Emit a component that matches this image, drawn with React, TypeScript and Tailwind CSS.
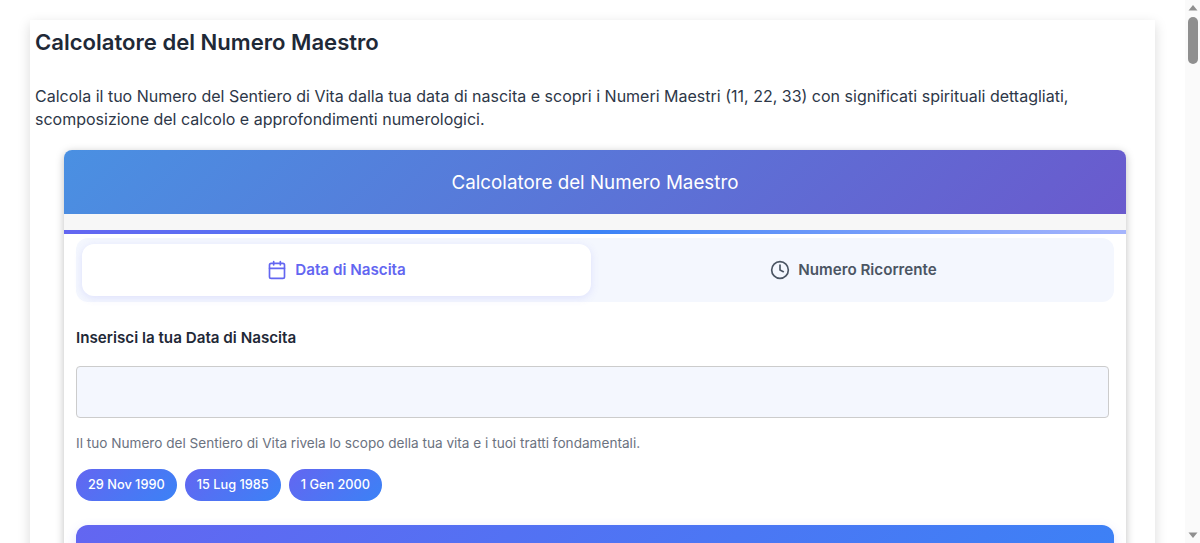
import { Calendar, Clock } from "lucide-react";

const samples = ["29 Nov 1990", "15 Lug 1985", "1 Gen 2000"];

export default function App() {
  return (
    <div className="flex h-screen overflow-hidden bg-white font-['Inter',sans-serif] text-[#1f2937]">
      <div className="flex-1 pt-5 pl-[30px] pr-[30px]">
        <main className="min-h-[700px] bg-white px-[5px] shadow-[0_4px_12px_rgba(0,0,0,0.15)]">
          <h1 className="pt-2 text-[22.08px] leading-[29px] font-semibold text-[#1f2937]">
            Calcolatore del Numero Maestro
          </h1>
          <p className="mt-[28px] text-base leading-[23px] text-[#2d3748]">
            Calcola il tuo Numero del Sentiero di Vita dalla tua data di nascita e scopri i Numeri Maestri (11, 22, 33) con significati spirituali dettagliati, scomposizione del calcolo e approfondimenti numerologici.
          </p>

          <section className="mt-[19px] ml-[29px] w-[1062px] rounded-lg bg-white shadow-[0_2px_8px_rgba(0,0,0,0.25)]">
            <header className="flex h-16 items-center justify-center rounded-t-lg bg-[linear-gradient(135deg,#4a90e2,#6a5acd)] pt-0.5 text-[18.8px] text-white">
              Calcolatore del Numero Maestro
            </header>
            <div className="h-4 bg-[#f7f7f7]" />
            <div className="h-1 bg-gradient-to-r from-[#6366f1] via-[#3b82f6] to-[#a5b4fc]" />

            <div className="px-3 pt-1">
              <div className="flex gap-2 rounded-xl bg-[#f4f7fe] p-1.5">
                <button className="flex h-[52px] w-[509px] items-center justify-center gap-2 rounded-xl bg-white text-[15.2px] font-semibold text-[#6366f1] shadow-[0_2px_8px_rgba(99,102,241,0.15)]">
                  <Calendar size={20} strokeWidth={2} />
                  Data di Nascita
                </button>
                <button className="flex h-[52px] flex-1 items-center justify-center gap-2 rounded-xl text-[15.2px] font-semibold text-[#4b5563]">
                  <Clock size={20} strokeWidth={2} />
                  Numero Ricorrente
                </button>
              </div>

              <label className="mt-[26px] block text-[15.2px] leading-[19px] font-semibold text-[#1f2937]">
                Inserisci la tua Data di Nascita
              </label>
              <input
                type="text"
                className="mt-[19px] block h-[52px] w-[1033px] rounded border border-[#cccccc] bg-[#f4f7fe]"
              />
              <p className="mt-4 text-[13.6px] leading-[18px] text-[#6b7280]">
                Il tuo Numero del Sentiero di Vita rivela lo scopo della tua vita e i tuoi tratti fondamentali.
              </p>

              <div className="mt-[17px] flex gap-2">
                {samples.map((s) => (
                  <button
                    key={s}
                    className="h-8 rounded-full bg-[linear-gradient(135deg,#6366f1,#3b82f6)] px-3 text-[12.75px] font-medium text-white"
                  >
                    {s}
                  </button>
                ))}
              </div>

              <button className="mt-6 mb-6 h-20 w-full rounded-xl bg-[linear-gradient(135deg,#6366f1,#3b82f6)] shadow-[0_4px_12px_rgba(99,102,241,0.2)]" />
            </div>
          </section>
        </main>
      </div>

      <aside className="flex w-[15px] shrink-0 flex-col items-center bg-[#fafafa]">
        <svg width="10" height="6" viewBox="0 0 10 6" className="mt-[5px] fill-[#8f8f8f]">
          <path d="M5 0 9.5 5.5H.5z" />
        </svg>
        <div className="mt-[6px] h-[47px] w-2.5 rounded-full bg-[#8f8f8f]" />
        <svg width="10" height="6" viewBox="0 0 10 6" className="mt-auto mb-[5px] fill-[#8f8f8f]">
          <path d="M5 6 9.5.5H.5z" />
        </svg>
      </aside>
    </div>
  );
}
